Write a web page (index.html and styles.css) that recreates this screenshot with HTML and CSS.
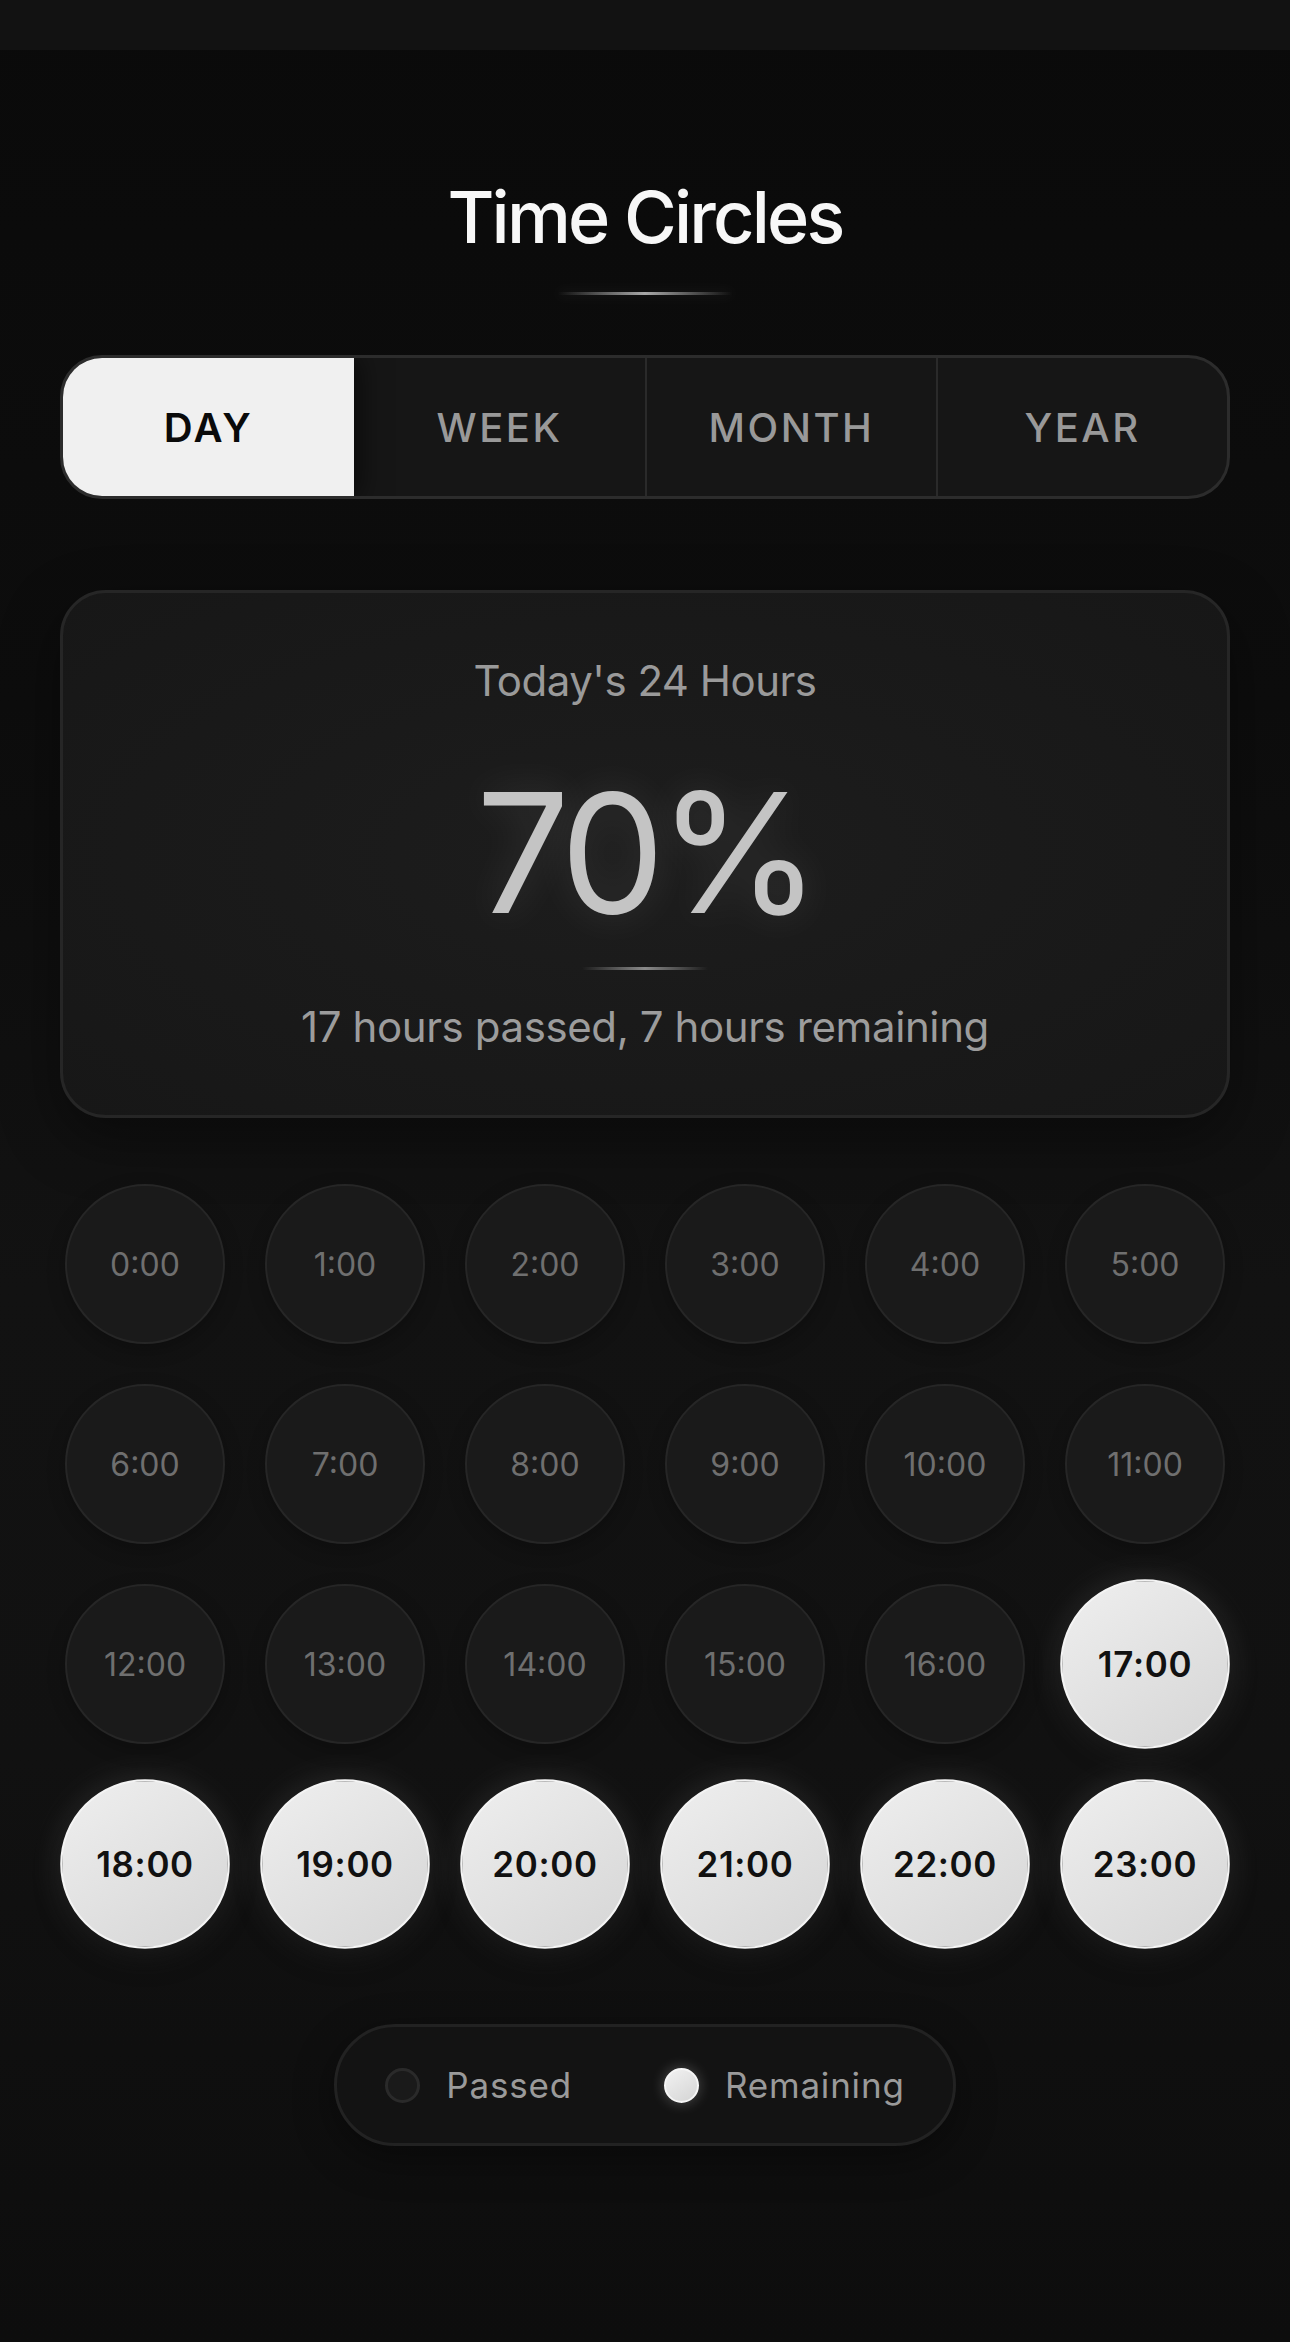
FILE: index.html
```html
<!DOCTYPE html>
<html lang="en">
<head>
<meta charset="utf-8">
<title>Time Circles</title>
<link rel="stylesheet" href="styles.css">
</head>
<body>
<div class="statusbar"></div>
<main class="app">
  <h1 class="title">Time Circles</h1>
  <div class="title-line"></div>

  <nav class="tabs">
    <div class="tab active">DAY</div>
    <div class="tab">WEEK</div>
    <div class="tab sep">MONTH</div>
    <div class="tab sep">YEAR</div>
  </nav>

  <section class="card">
    <div class="card-label">Today's 24 Hours</div>
    <div class="percent">70%</div>
    <div class="divider"></div>
    <div class="summary">17 hours passed, 7 hours remaining</div>
  </section>

  <section class="hours">
    <div class="hour passed">0:00</div>
    <div class="hour passed">1:00</div>
    <div class="hour passed">2:00</div>
    <div class="hour passed">3:00</div>
    <div class="hour passed">4:00</div>
    <div class="hour passed">5:00</div>
    <div class="hour passed">6:00</div>
    <div class="hour passed">7:00</div>
    <div class="hour passed">8:00</div>
    <div class="hour passed">9:00</div>
    <div class="hour passed">10:00</div>
    <div class="hour passed">11:00</div>
    <div class="hour passed">12:00</div>
    <div class="hour passed">13:00</div>
    <div class="hour passed">14:00</div>
    <div class="hour passed">15:00</div>
    <div class="hour passed">16:00</div>
    <div class="hour remaining">17:00</div>
    <div class="hour remaining">18:00</div>
    <div class="hour remaining">19:00</div>
    <div class="hour remaining">20:00</div>
    <div class="hour remaining">21:00</div>
    <div class="hour remaining">22:00</div>
    <div class="hour remaining">23:00</div>
  </section>

  <div class="legend">
    <div class="legend-item"><span class="dot dot-passed"></span><span>Passed</span></div>
    <div class="legend-item"><span class="dot dot-remaining"></span><span>Remaining</span></div>
  </div>
</main>
</body>
</html>
```

FILE: styles.css
```css
* { box-sizing: border-box; }

html, body {
  margin: 0;
  padding: 0;
}

body {
  min-height: 2342px;
  background: linear-gradient(180deg, #0a0a0a 0%, #0d0d0d 30%, #121212 55%, #111111 75%, #0d0d0d 100%);
  font-family: Inter, "Noto Sans", "Liberation Sans", sans-serif;
  color: #f5f5f5;
}

.statusbar {
  height: 50px;
  background: #121212;
}

.app {
  padding: 0 60px 120px;
  display: flex;
  flex-direction: column;
}

.title {
  margin: 124px 0 0;
  font-size: 72px;
  line-height: 1.2;
  font-weight: 500;
  letter-spacing: -2.8px;
  text-align: center;
  color: #f7f7f7;
}

.title-line {
  width: 176px;
  height: 3px;
  margin: 32px auto 0;
  background: linear-gradient(90deg, rgba(150,150,150,0) 0%, #a8a8a8 50%, rgba(150,150,150,0) 100%);
  box-shadow: 0 0 14px rgba(255,255,255,0.12);
}

.tabs {
  margin-top: 60px;
  display: grid;
  grid-template-columns: repeat(4, 1fr);
  height: 144px;
  border: 3px solid #2c2c2c;
  border-radius: 42px;
  overflow: hidden;
  background: #161616;
}

.tab {
  display: flex;
  align-items: center;
  justify-content: center;
  font-size: 40px;
  font-weight: 500;
  letter-spacing: 2.5px;
  color: #999999;
}

.tab.sep {
  border-left: 2px solid #2a2a2a;
}

.tab.active {
  background: #f0f0f0;
  color: #0a0a0a;
  font-weight: 600;
  box-shadow: 6px 0 24px rgba(0,0,0,0.55);
  position: relative;
  z-index: 1;
}

.card {
  margin-top: 91px;
  border: 3px solid #262626;
  border-radius: 46px;
  background: radial-gradient(ellipse at 50% 50%, #1d1d1d 0%, #1a1a1a 45%, #171717 100%);
  padding: 63px 0 63px;
  text-align: center;
  box-shadow: 0 20px 60px rgba(0,0,0,0.4);
}

.card-label {
  font-size: 42px;
  line-height: 1.2;
  letter-spacing: -0.5px;
  color: #9a9a9a;
}

.percent {
  margin-top: 63px;
  font-size: 166px;
  line-height: 1;
  font-weight: 400;
  letter-spacing: -7px;
  color: #c4c4c4;
  text-shadow: 0 0 40px rgba(255,255,255,0.12);
}

.divider {
  width: 126px;
  height: 3px;
  margin: 31px auto 0;
  background: linear-gradient(90deg, rgba(120,120,120,0) 0%, #8a8a8a 50%, rgba(120,120,120,0) 100%);
}

.summary {
  margin-top: 32px;
  font-size: 42px;
  line-height: 1.2;
  letter-spacing: -0.4px;
  color: #9c9c9c;
}

.hours {
  margin-top: 66px;
  display: grid;
  grid-template-columns: repeat(6, 160px);
  gap: 40px;
  justify-content: center;
}

.hour {
  width: 160px;
  height: 160px;
  border-radius: 50%;
  display: flex;
  align-items: center;
  justify-content: center;
  font-size: 32px;
}

.hour.passed {
  background: #1a1a1a;
  border: 2px solid #262626;
  color: #6f6f6f;
  box-shadow: 0 6px 18px rgba(0,0,0,0.25);
}

.hour.remaining {
  background: linear-gradient(145deg, #efefef 0%, #e2e2e2 50%, #d5d5d5 100%);
  border: 2px solid #f4f4f4;
  color: #111111;
  font-size: 33px;
  font-weight: 600;
  letter-spacing: 0.6px;
  transform: scale(1.06);
  box-shadow: 0 0 34px rgba(255,255,255,0.12), 0 10px 24px rgba(0,0,0,0.45);
}

.legend {
  margin: 80px auto 0;
  height: 122px;
  padding: 0 48px;
  display: flex;
  align-items: center;
  gap: 92px;
  border: 3px solid #222222;
  border-radius: 61px;
  background: #131313;
  box-shadow: 0 12px 40px rgba(0,0,0,0.4);
}

.legend-item {
  display: flex;
  align-items: center;
  gap: 26px;
  font-size: 35px;
  letter-spacing: 0.8px;
  color: #9a9a9a;
}

.dot {
  width: 35px;
  height: 35px;
  border-radius: 50%;
  display: block;
}

.dot-passed {
  background: #1a1a1a;
  border: 3px solid #2a2a2a;
}

.dot-remaining {
  background: linear-gradient(145deg, #f2f2f2, #d4d4d4);
  border: 2px solid #f6f6f6;
  box-shadow: 0 0 14px rgba(255,255,255,0.25);
}
```
